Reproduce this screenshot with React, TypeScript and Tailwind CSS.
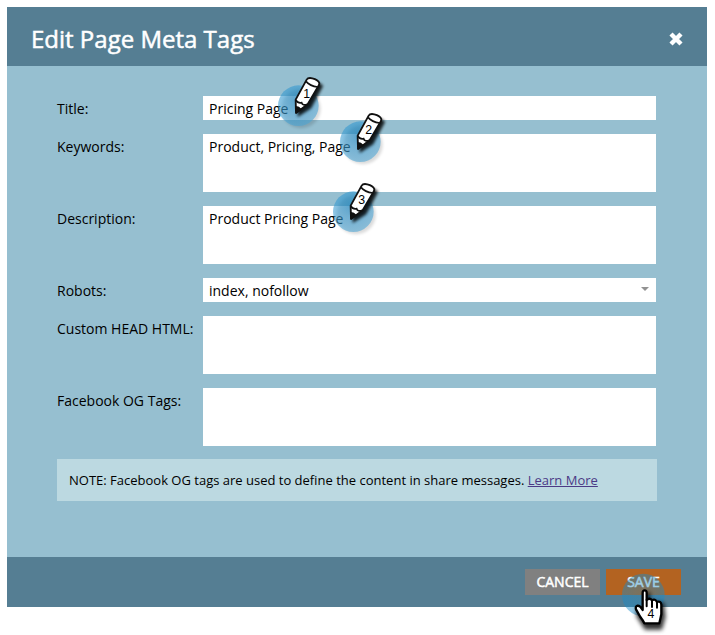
import type { ReactNode } from "react";

function Pencil({ step, className }: { step: number; className: string }) {
  return (
    <svg
      aria-hidden="true"
      viewBox="0 0 156 168"
      className={`pointer-events-none absolute z-10 h-[56px] w-[52px] overflow-visible ${className}`}
    >
      <defs>
        <radialGradient id={`glow${step}`} cx="0.45" cy="0.36" r="0.66">
          <stop offset="0" stopColor="#1f8ac6" stopOpacity="0.68" />
          <stop offset="0.5" stopColor="#3498cf" stopOpacity="0.6" />
          <stop offset="1" stopColor="#4aa5d6" stopOpacity="0.56" />
        </radialGradient>
        <filter id={`soft${step}`} x="-40%" y="-40%" width="190%" height="190%">
          <feGaussianBlur stdDeviation="5" />
        </filter>
      </defs>
      <circle cx="72" cy="104" r="59" fill="#000" opacity="0.14" filter={`url(#soft${step})`} />
      <circle cx="64" cy="95" r="61" fill={`url(#glow${step})`} />
      <path
        d="M64 125 64 83 97 26Q117 18 136 36L101 101Z"
        fill="#000"
        stroke="#000"
        strokeWidth="4"
        opacity="0.85"
        filter={`url(#soft${step})`}
      />
      <path
        d="M57 117 56 77 89 17Q93 10 106 13Q123 17 127 27L126 33 92 91Z"
        fill="#fff"
        stroke="#111"
        strokeWidth="5.5"
        strokeLinejoin="round"
      />
      <path d="M87 22Q99 36 122 39M56 78Q63 89 74 86Q77 96 91 91" fill="none" stroke="#111" strokeWidth="5" />
      <path d="M57 117 56 97Q66 97 74 106Z" fill="#111" stroke="#111" strokeWidth="2" />
      <text x="89" y="71" textAnchor="middle" fontSize="37" fill="#000" className="font-['Liberation_Sans',sans-serif]">
        {step}
      </text>
    </svg>
  );
}

function Hand() {
  return (
    <svg
      aria-hidden="true"
      viewBox="0 0 165 180"
      className="pointer-events-none absolute top-[4px] left-[14px] z-10 h-[60px] w-[55px] overflow-visible"
    >
      <defs>
        <radialGradient id="handGlow">
          <stop offset="0" stopColor="#2588bd" stopOpacity="0.36" />
          <stop offset="1" stopColor="#168bcb" stopOpacity="0.46" />
        </radialGradient>
        <filter id="handSoft" x="-40%" y="-40%" width="200%" height="200%">
          <feGaussianBlur stdDeviation="6" />
        </filter>
      </defs>
      <circle cx="70" cy="66" r="64" fill="url(#handGlow)" />
      <path d="M78 61H88V86L130 92 134 132 124 168H76L52 130V108L76 116Z" fill="#000" stroke="#000" strokeWidth="5" opacity="0.8" filter="url(#handSoft)" />
      <path
        d="M68 59Q68 52 74 52Q80 52 80 59V81Q88 73 96 82Q105 76 111 87Q123 83 124 95V124Q121 138 118 151H73Q69 142 61 132L48 109Q45 100 53 98Q61 98 68 111Z"
        fill="#fff"
        stroke="#000"
        strokeWidth="7"
        strokeLinejoin="round"
      />
      <path d="M80 80V100M96 83V102M111 88V104" stroke="#000" strokeWidth="6" strokeLinecap="round" />
      <text x="93" y="136" textAnchor="middle" fontSize="37" fill="#000" className="font-['Liberation_Sans',sans-serif]">
        4
      </text>
    </svg>
  );
}

function Field({ id, label, children }: { id: string; label: string; children: ReactNode }) {
  return (
    <div className="flex items-start">
      <label htmlFor={id} className="w-[146px] shrink-0 pt-0.5 leading-[22px] whitespace-nowrap">
        {label}
      </label>
      <div className="relative mr-px flex min-w-0 flex-1">{children}</div>
    </div>
  );
}

const area = "block h-[58px] w-full resize-none overflow-hidden bg-white px-1.5 pt-0.5 leading-[22px] outline-none";

export default function App() {
  return (
    <div className="min-h-screen bg-white p-2 pt-[7px] pl-[7px] font-['Open_Sans',sans-serif] text-[14px] text-black">
      <section role="dialog" aria-labelledby="dialog-title" className="bg-[#96bfd0]">
        <header className="flex h-[59px] items-center justify-between bg-[#557e93] pr-[23px] pl-6">
          <h1 id="dialog-title" className="pt-1 text-[24px] leading-8 font-normal text-white [-webkit-text-stroke:0.5px_white]">
            Edit Page Meta Tags
          </h1>
          <button type="button" aria-label="Close" className="mt-1">
            <svg viewBox="0 0 16 16" className="size-4">
              <path d="M3 3 13 13M13 3 3 13" stroke="#fff" strokeWidth="4.4" />
            </svg>
          </button>
        </header>

        <form className="flex flex-col gap-[14px] px-[50px] pt-[30px] pb-14">
          <Field id="title" label="Title:">
            <input id="title" defaultValue="Pricing Page" className="h-6 w-full bg-white px-1.5 outline-none" />
            <Pencil step={1} className="top-[-22px] left-[74px]" />
          </Field>
          <Field id="keywords" label="Keywords:">
            <textarea id="keywords" defaultValue="Product, Pricing, Page" className={area} />
            <Pencil step={2} className="top-[-24px] left-[136px]" />
          </Field>
          <Field id="description" label="Description:">
            <textarea id="description" defaultValue="Product Pricing Page" className={area} />
            <Pencil step={3} className="top-[-26px] left-[129px]" />
          </Field>
          <Field id="robots" label="Robots:">
            <select id="robots" className="h-6 w-full appearance-none bg-white px-1.5 outline-none">
              <option>index, nofollow</option>
            </select>
            <svg aria-hidden="true" viewBox="0 0 8 4" className="pointer-events-none absolute top-[9px] right-[7px] h-1 w-2">
              <path d="M0 0H8L4 4Z" fill="#929292" />
            </svg>
          </Field>
          <Field id="head" label="Custom HEAD HTML:">
            <textarea id="head" className={area} />
          </Field>
          <Field id="facebook" label="Facebook OG Tags:">
            <textarea id="facebook" className={area} />
          </Field>
          <p className="-mt-px bg-[#bcd9e1] px-3 py-[11px] text-[13px] leading-5">
            NOTE: Facebook OG tags are used to define the content in share messages.{" "}
            <a href="#learn" className="text-[#4b3a86] underline">Learn More</a>
          </p>
        </form>

        <footer className="flex h-[50px] items-center justify-end gap-1.5 bg-[#557e93] pr-[26px] text-white">
          <button type="button" className="h-[26px] w-[75px] bg-[#808080] leading-[26px] [-webkit-text-stroke:0.5px_white]">
            CANCEL
          </button>
          <button type="button" className="relative h-[26px] w-[75px] bg-[#b36321] leading-[26px] [-webkit-text-stroke:0.5px_white]">
            SAVE
            <Hand />
          </button>
        </footer>
      </section>
    </div>
  );
}
